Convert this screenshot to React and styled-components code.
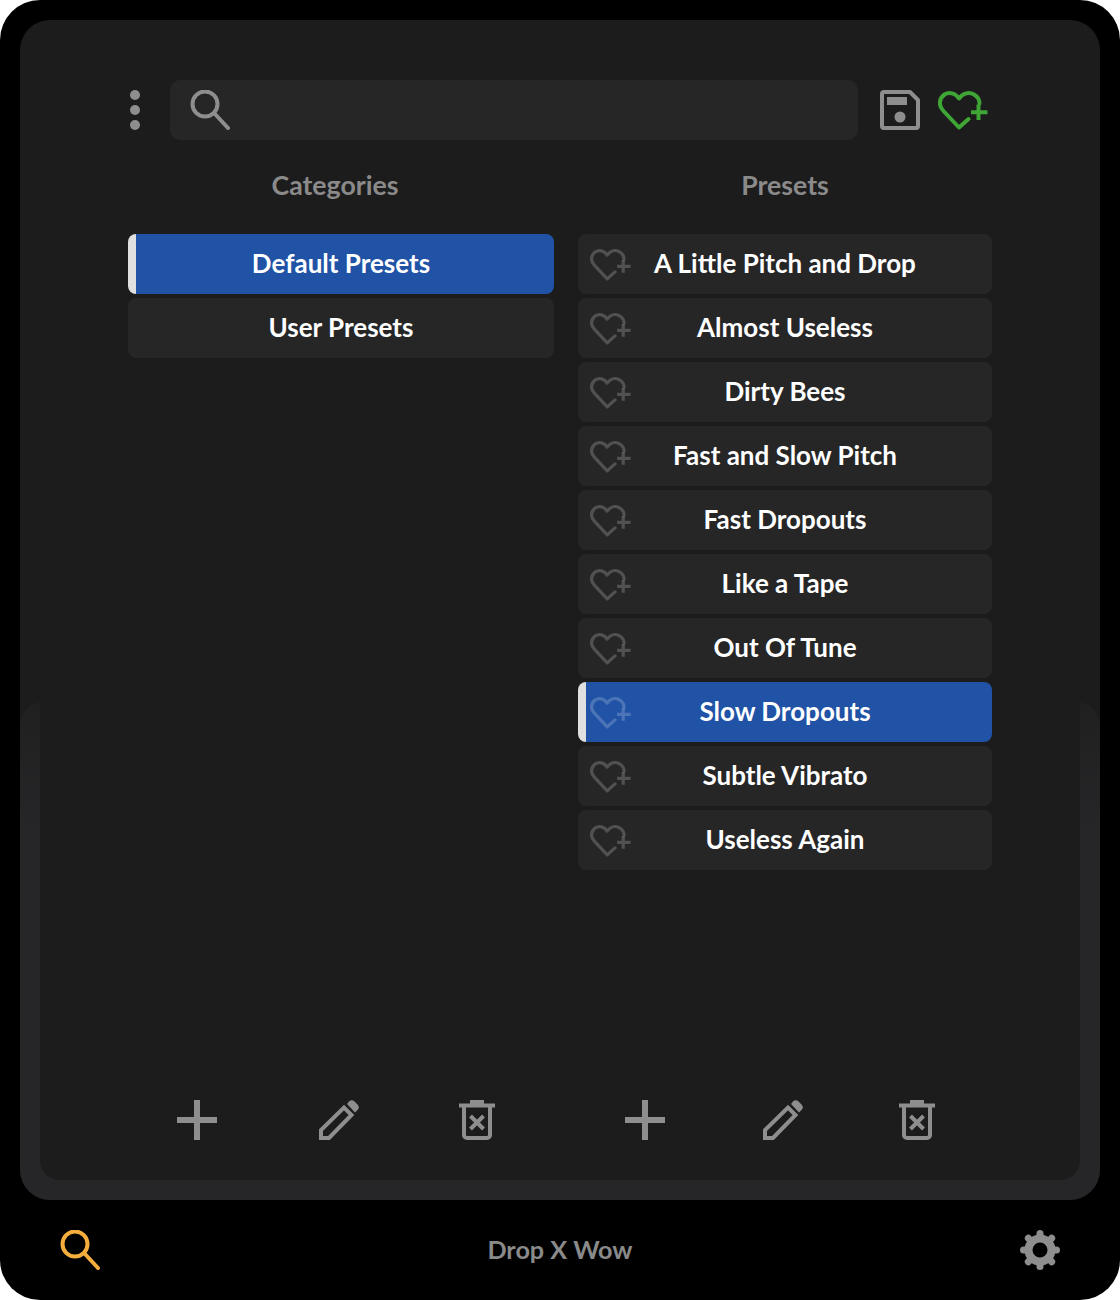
import React from 'react';
import styled, { createGlobalStyle } from 'styled-components';

const GlobalStyle = createGlobalStyle`
    * {
        box-sizing: border-box;
    }

    body {
        margin: 0;
        background: #fff;
        font-family: 'Lato', 'Liberation Sans', sans-serif;
    }
`;

const categories = ['Default Presets', 'User Presets'];
const presets = [
    'A Little Pitch and Drop',
    'Almost Useless',
    'Dirty Bees',
    'Fast and Slow Pitch',
    'Fast Dropouts',
    'Like a Tape',
    'Out Of Tune',
    'Slow Dropouts',
    'Subtle Vibrato',
    'Useless Again'
];

const SearchIcon = ({ color }) => (
    <svg width="40" height="40" viewBox="0 0 40 40" fill="none" stroke={color} strokeWidth="4" strokeLinecap="round">
        <circle cx="15" cy="14" r="12.5" />
        <path d="M24.5 23.5 L38 38" />
    </svg>
);

const SaveIcon = () => (
    <svg width="40" height="40" viewBox="0 0 40 40">
        <path d="M4 2 H30 L38 10 V36 a2 2 0 0 1 -2 2 H4 a2 2 0 0 1 -2 -2 V4 a2 2 0 0 1 2 -2 Z" fill="none" stroke="#8e8e8e" strokeWidth="4" strokeLinejoin="round" />
        <rect x="7" y="7" width="20" height="8" fill="#8e8e8e" />
        <circle cx="20" cy="27" r="5.5" fill="#8e8e8e" />
    </svg>
);

const HeartPlus = ({ color, width, height }) => (
    <svg width={width} height={height} viewBox="0 0 50 40" fill="none" stroke={color} strokeWidth="4">
        <path d="M30.5 29 L21 37.5 L5 20.5 C0 15 1.5 8 6.5 4.5 C11 1.5 17.5 3 21 8.5 C25 3 31 1.5 36 4.5 C39.5 6.5 41.5 10 41.5 13.5" strokeLinecap="round" strokeLinejoin="round" />
        <path d="M40.5 14.5 V30 M33 22.3 H49.5" />
    </svg>
);

const PlusIcon = () => (
    <svg width="40" height="40" viewBox="0 0 40 40" stroke="#8e8e8e" strokeWidth="6">
        <path d="M20 0 V40 M0 20 H40" />
    </svg>
);

const PencilIcon = () => (
    <svg width="40" height="40" viewBox="0 0 40 40">
        <path d="M2 38 V30 L25 7.5 L32.5 15 L10 38 Z" fill="none" stroke="#8e8e8e" strokeWidth="4" />
        <path d="M28 4 L30 1.5 a4 4 0 0 1 5.5 0 L38.5 4.5 a4 4 0 0 1 0 5.5 L36 12.5 Z" fill="#8e8e8e" />
    </svg>
);

const TrashIcon = () => (
    <svg width="36" height="40" viewBox="0 0 36 40" fill="none" stroke="#8e8e8e">
        <path d="M0 5.5 H36" strokeWidth="4" />
        <path d="M11 2 H25" strokeWidth="4" />
        <path d="M5 6 V35 a3 3 0 0 0 3 3 H28 a3 3 0 0 0 3 -3 V6" strokeWidth="4" />
        <path d="M11.5 16 L24.5 29 M24.5 16 L11.5 29" strokeWidth="4" />
    </svg>
);

const GearIcon = () => (
    <svg width="40" height="40" viewBox="0 0 40 40" fill="none" stroke="#8e8e8e">
        <circle cx="20" cy="20" r="11.5" strokeWidth="8" />
        {[0, 45, 90, 135, 180, 225, 270, 315].map((angle) => (
            <path key={angle} d="M20 5 V3.5" strokeWidth="7" strokeLinecap="round" transform={`rotate(${angle} 20 20)`} />
        ))}
    </svg>
);

function App() {
    return (
        <>
            <GlobalStyle />
            <Frame>
                <Shell>
                    <BackPlate />
                    <Toolbar>
                        <Dots>
                            <span />
                            <span />
                            <span />
                        </Dots>
                        <SearchBar>
                            <SearchIcon color="#8e8e8e" />
                        </SearchBar>
                        <SaveIcon />
                        <HeartPlus color="#3fa535" width={50} height={40} />
                    </Toolbar>
                    <Columns>
                        <Column>
                            <Title $shift={12}>Categories</Title>
                            <List>
                                {categories.map((name, i) => (
                                    <Row key={name} $selected={i === 0}>
                                        <RowLabel>{name}</RowLabel>
                                    </Row>
                                ))}
                            </List>
                            <Actions>
                                <ActionCell><PlusIcon /></ActionCell>
                                <ActionCell $nudge={2}><PencilIcon /></ActionCell>
                                <ActionCell $nudge={12}><TrashIcon /></ActionCell>
                            </Actions>
                        </Column>
                        <Column>
                            <Title>Presets</Title>
                            <List>
                                {presets.map((name) => (
                                    <Row key={name} $selected={name === 'Slow Dropouts'}>
                                        <RowHeart>
                                            <HeartPlus color="rgba(255,255,255,0.2)" width={41} height={33} />
                                        </RowHeart>
                                        <RowLabel>{name}</RowLabel>
                                    </Row>
                                ))}
                            </List>
                            <Actions>
                                <ActionCell><PlusIcon /></ActionCell>
                                <ActionCell $nudge={2}><PencilIcon /></ActionCell>
                                <ActionCell $nudge={12}><TrashIcon /></ActionCell>
                            </Actions>
                        </Column>
                    </Columns>
                </Shell>
                <Footer>
                    <SearchIcon color="#f5ae3d" />
                    <FooterTitle>Drop X Wow</FooterTitle>
                    <GearIcon />
                </Footer>
            </Frame>
        </>
    );
}

const Frame = styled.div`
    width: 1120px;
    height: 1300px;
    padding: 20px 20px 0;
    background: #000;
    border-radius: 40px;
`;

const Shell = styled.div`
    position: relative;
    display: flex;
    flex-direction: column;
    height: 1180px;
    padding: 60px 108px 60px;
    background: #1c1c1d;
    border-radius: 30px;
    overflow: hidden;
`;

const BackPlate = styled.div`
    position: absolute;
    left: 0;
    right: 0;
    bottom: 0;
    height: 498px;
    background: linear-gradient(#202021, #262628 130px);
    border-radius: 24px 24px 30px 30px;

    &::after {
        content: '';
        position: absolute;
        left: 20px;
        right: 20px;
        top: 0;
        bottom: 20px;
        background: #1c1c1d;
        border-radius: 0 0 20px 20px;
    }
`;

const Toolbar = styled.div`
    position: relative;
    display: flex;
    align-items: center;
    height: 60px;
    padding-right: 4px;

    > svg:last-child {
        margin-left: 18px;
    }
`;

const Dots = styled.div`
    display: flex;
    flex-direction: column;
    gap: 5px;
    width: 14px;
    align-items: center;
    margin-right: 28px;

    span {
        width: 10px;
        height: 10px;
        border-radius: 50%;
        background: #8e8e8e;
    }
`;

const SearchBar = styled.div`
    flex: 1;
    display: flex;
    align-items: center;
    height: 60px;
    margin-right: 22px;
    padding-left: 20px;
    background: #262627;
    border-radius: 10px;
`;

const Columns = styled.div`
    position: relative;
    flex: 1;
    display: grid;
    grid-template-columns: 426px 414px;
    gap: 24px;
`;

const Column = styled.div`
    display: flex;
    flex-direction: column;
`;

const Title = styled.div`
    height: 94px;
    padding-top: 29px;
    padding-right: ${(p) => p.$shift || 0}px;
    text-align: center;
    font-size: 26.7px;
    line-height: 32px;
    font-weight: 700;
    color: #8a8a8b;
`;

const List = styled.div`
    display: flex;
    flex-direction: column;
    gap: 4px;
`;

const Row = styled.div`
    display: grid;
    grid-template-columns: 1fr auto 1fr;
    align-items: center;
    height: 60px;
    padding: 0 12px;
    border-radius: 8px;
    background: ${(p) => (p.$selected ? 'linear-gradient(90deg, #e0e0e0 8px, #2052a5 8px)' : '#262627')};
`;

const RowHeart = styled.div`
    grid-column: 1;
    display: flex;
`;

const RowLabel = styled.div`
    grid-column: 2;
    margin-bottom: 2px;
    font-size: 26px;
    font-weight: 700;
    color: #fff;
    white-space: nowrap;
`;

const Actions = styled.div`
    display: grid;
    grid-template-columns: repeat(3, 1fr);
    margin-top: auto;
    margin-left: -2px;
`;

const ActionCell = styled.div`
    display: flex;
    justify-content: center;
    height: 40px;
    padding-right: ${(p) => p.$nudge || 0}px;
`;

const Footer = styled.div`
    display: flex;
    align-items: center;
    justify-content: space-between;
    height: 100px;
    padding: 0 40px;
`;

const FooterTitle = styled.div`
    margin-bottom: 2px;
    font-size: 25.2px;
    font-weight: 700;
    color: #8a8a8b;
`;

export default App;
